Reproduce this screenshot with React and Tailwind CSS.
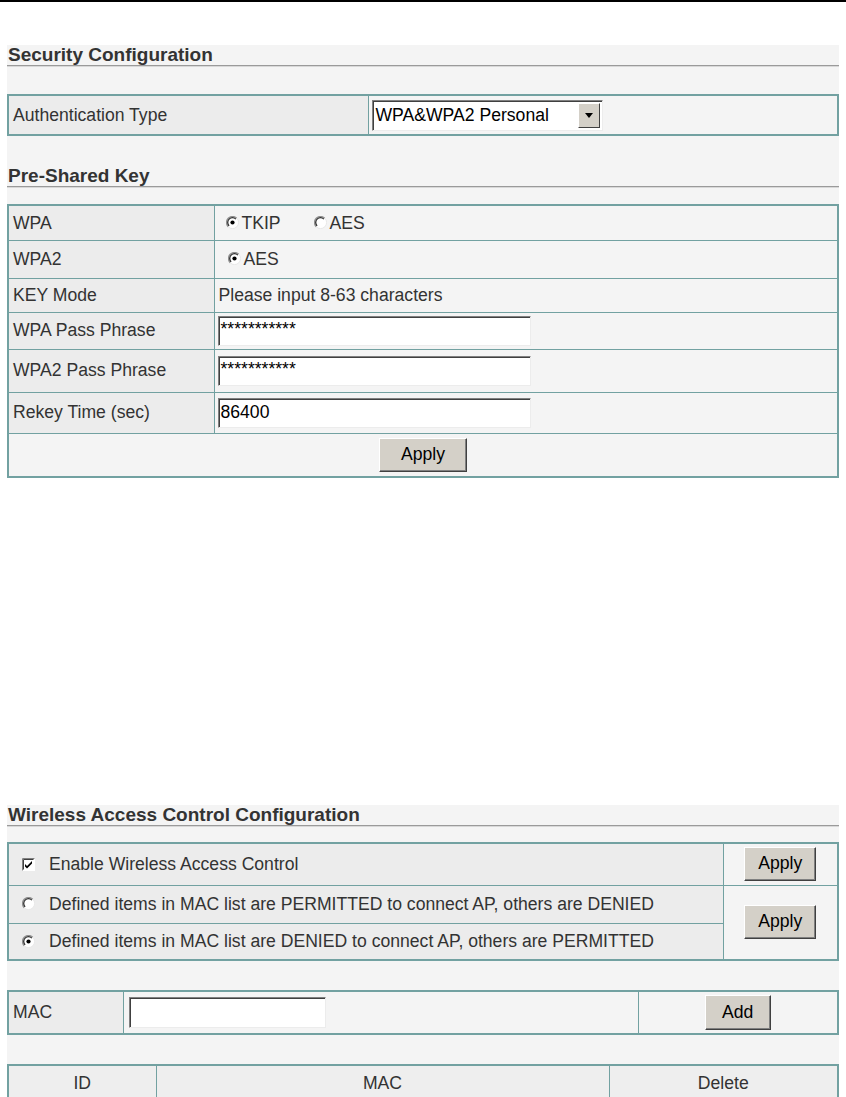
import React from "react";

const B = "border border-[#72a1a1]";

function Heading({ children }) {
  return (
    <div>
      <div className="h-[20px] leading-[20px] text-[19px] font-bold text-[#333] pl-[1px]">{children}</div>
      <div className="h-[1px] bg-[#9a9a9a]" />
      <div className="h-[1px] bg-[#d8d8d8]" />
    </div>
  );
}

function Radio({ checked }) {
  return (
    <svg width="13" height="13" viewBox="0 0 13 13" className="inline-block shrink-0">
      <circle cx="6.5" cy="6.5" r="6" fill="#fff" />
      <path d="M2.2 10.8 A6 6 0 0 1 10.8 2.2" stroke="#909090" strokeWidth="1.2" fill="none" />
      <path d="M3.1 9.9 A4.8 4.8 0 0 1 9.9 3.1" stroke="#303030" strokeWidth="1.3" fill="none" />
      <path d="M10.8 2.2 A6 6 0 0 1 2.2 10.8" stroke="#e8e8e8" strokeWidth="1" fill="none" />
      {checked && <circle cx="6.5" cy="6.5" r="2.1" fill="#000" />}
    </svg>
  );
}

function Checkbox() {
  return (
    <svg width="13" height="13" viewBox="0 0 13 13" className="inline-block shrink-0">
      <rect x="0" y="0" width="13" height="13" fill="#fff" />
      <path d="M0.5 12.5 V0.5 H12.5" stroke="#808080" fill="none" />
      <path d="M1.5 11.5 V1.5 H11.5" stroke="#404040" fill="none" />
      <path d="M3 6 L5 8 L10 3 V5.5 L5 10.5 L3 8.5 Z" fill="#000" />
    </svg>
  );
}

function Button({ children, className = "" }) {
  return (
    <button
      className={
        "bg-[#d4d0c8] text-[17.6px] text-black border border-t-white border-l-white border-r-[#404040] border-b-[#404040] shadow-[inset_-1px_-1px_0_#808080] leading-none " +
        className
      }
    >
      {children}
    </button>
  );
}

function TextBox({ value, className = "" }) {
  return (
    <div
      className={
        "bg-white border border-t-[#808080] border-l-[#808080] border-r-[#ececec] border-b-[#ececec] shadow-[inset_1px_1px_0_#404040] flex pl-[2px] text-black text-[17.6px] " +
        className
      }
    >
      {value}
    </div>
  );
}

export default function App() {
  return (
    <div
      className="w-[846px] h-[1097px] bg-white overflow-hidden text-[#333] text-[17.6px]"
      style={{ fontFamily: '"Liberation Sans", Arial, sans-serif' }}
    >
      <div className="h-[2px] bg-black" />

      {/* Section 1 */}
      <div className="mt-[43px] mx-[7px] bg-[#f4f4f4]">
        <Heading>Security Configuration</Heading>
        <div className="h-[27px]" />
        <table className="w-full border-collapse border-2 border-[#72a1a1]">
          <tbody>
            <tr className="h-[40px]">
              <td className={B + " w-[360px] bg-[#ececec] pl-[4px]"}>Authentication Type</td>
              <td className={B + " pl-[3px]"}>
                <div className="flex w-[231px] h-[31px] bg-white border border-t-[#808080] border-l-[#808080] border-r-[#ececec] border-b-[#ececec] shadow-[inset_1px_1px_0_#404040] items-center">
                  <span className="flex-1 pl-[3px] text-black">WPA&amp;WPA2 Personal</span>
                  <span className="w-[22px] h-[25px] mr-[2px] bg-[#d4d0c8] border border-t-white border-l-white border-r-[#404040] border-b-[#404040] flex items-center justify-center">
                    <svg width="8" height="5" viewBox="0 0 8 5">
                      <path d="M0 0 H8 L4 5 Z" fill="#000" />
                    </svg>
                  </span>
                </div>
              </td>
            </tr>
          </tbody>
        </table>
        <div className="h-[30px]" />
        <Heading>Pre-Shared Key</Heading>
        <div className="h-[16px]" />
        <table className="w-full border-collapse border-2 border-[#72a1a1]">
          <tbody>
            <tr className="h-[35px]">
              <td className={B + " w-[206px] bg-[#ececec] pl-[4px]"}>WPA</td>
              <td className={B + " pl-[11px]"}>
                <div className="flex items-center">
                  <Radio checked />
                  <span className="ml-[3px]">TKIP</span>
                  <span className="ml-[33px] flex items-center">
                    <Radio />
                    <span className="ml-[3px]">AES</span>
                  </span>
                </div>
              </td>
            </tr>
            <tr className="h-[38px]">
              <td className={B + " bg-[#ececec] pl-[4px]"}>WPA2</td>
              <td className={B + " pl-[13px]"}>
                <div className="flex items-center">
                  <Radio checked />
                  <span className="ml-[3px]">AES</span>
                </div>
              </td>
            </tr>
            <tr className="h-[34px]">
              <td className={B + " bg-[#ececec] pl-[4px]"}>KEY Mode</td>
              <td className={B + " pl-[4px]"}>Please input 8-63 characters</td>
            </tr>
            <tr className="h-[37px]">
              <td className={B + " bg-[#ececec] pl-[4px]"}>WPA Pass Phrase</td>
              <td className={B + " pl-[3px]"}>
                <TextBox value="***********" className="w-[313px] h-[30px] items-start pt-[2px] leading-[20px]" />
              </td>
            </tr>
            <tr className="h-[43px]">
              <td className={B + " bg-[#ececec] pl-[4px]"}>WPA2 Pass Phrase</td>
              <td className={B + " pl-[3px]"}>
                <TextBox value="***********" className="w-[313px] h-[30px] items-start pt-[2px] leading-[20px]" />
              </td>
            </tr>
            <tr className="h-[41px]">
              <td className={B + " bg-[#ececec] pl-[4px]"}>Rekey Time (sec)</td>
              <td className={B + " pl-[3px]"}>
                <TextBox value="86400" className="w-[313px] h-[30px] items-center" />
              </td>
            </tr>
            <tr className="h-[44px]">
              <td colSpan={2} className={B + " text-center"}>
                <Button className="w-[88px] h-[34px]">Apply</Button>
              </td>
            </tr>
          </tbody>
        </table>
      </div>

      {/* Section 2 */}
      <div className="mt-[327px] mx-[7px] bg-[#f4f4f4] h-[300px]">
        <Heading>Wireless Access Control Configuration</Heading>
        <div className="h-[15px]" />
        <table className="w-full border-collapse border-2 border-[#72a1a1]">
          <tbody>
            <tr className="h-[42px]">
              <td className={B + " w-[715px] bg-[#ececec] pl-[13px]"}>
                <div className="flex items-center">
                  <Checkbox />
                  <span className="ml-[14px]">Enable Wireless Access Control</span>
                </div>
              </td>
              <td className={B + " text-center"}>
                <Button className="w-[72px] h-[34px]">Apply</Button>
              </td>
            </tr>
            <tr className="h-[38px]">
              <td className={B + " bg-[#ececec] pl-[13px]"}>
                <div className="flex items-center">
                  <Radio />
                  <span className="ml-[14px]">Defined items in MAC list are PERMITTED to connect AP, others are DENIED</span>
                </div>
              </td>
              <td rowSpan={2} className={B + " text-center"}>
                <Button className="w-[72px] h-[34px]">Apply</Button>
              </td>
            </tr>
            <tr className="h-[37px]">
              <td className={B + " bg-[#ececec] pl-[13px]"}>
                <div className="flex items-center">
                  <Radio checked />
                  <span className="ml-[14px]">Defined items in MAC list are DENIED to connect AP, others are PERMITTED</span>
                </div>
              </td>
            </tr>
          </tbody>
        </table>
        <div className="h-[29px]" />
        <table className="w-full border-collapse border-2 border-[#72a1a1]">
          <tbody>
            <tr className="h-[43px]">
              <td className={B + " w-[115px] bg-[#ececec] pl-[4px]"}>MAC</td>
              <td className={B + " w-[515px] pl-[5px]"}>
                <TextBox value="" className="w-[197px] h-[31px]" />
              </td>
              <td className={B + " text-center"}>
                <Button className="w-[66px] h-[35px]">Add</Button>
              </td>
            </tr>
          </tbody>
        </table>
        <div className="h-[29px]" />
        <table className="w-full border-collapse border-2 border-[#72a1a1]">
          <tbody>
            <tr className="h-[36px] bg-[#eeeeee]">
              <td className={B + " w-[148px] text-center"}>ID</td>
              <td className={B + " w-[453px] text-center"}>MAC</td>
              <td className={B + " text-center"}>Delete</td>
            </tr>
          </tbody>
        </table>
      </div>
    </div>
  );
}
